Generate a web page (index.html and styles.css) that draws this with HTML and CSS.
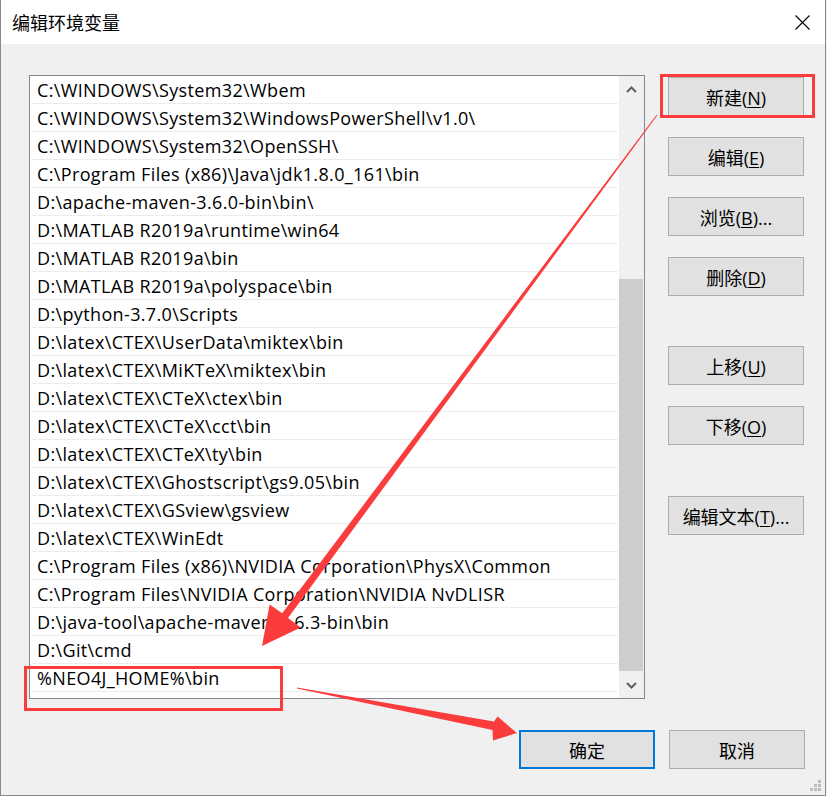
FILE: index.html
```html
<!DOCTYPE html>
<html lang="zh-CN">
<head>
<meta charset="utf-8">
<title>编辑环境变量</title>
<link rel="stylesheet" href="styles.css">
</head>
<body>
<div class="window">
  <div class="titlebar">
    <span class="title">编辑环境变量</span>
    <span class="close">
      <svg width="15" height="15" viewBox="0 0 15 15"><path d="M0.5 0.5 L14.5 14.5 M14.5 0.5 L0.5 14.5" stroke="#000" stroke-width="1.1" fill="none"/></svg>
    </span>
  </div>
  <div class="content">
    <div class="main">
      <div class="list">
        <div class="rows">
          <div class="row">C:\WINDOWS\System32\Wbem</div>
          <div class="row">C:\WINDOWS\System32\WindowsPowerShell\v1.0\</div>
          <div class="row">C:\WINDOWS\System32\OpenSSH\</div>
          <div class="row">C:\Program Files (x86)\Java\jdk1.8.0_161\bin</div>
          <div class="row">D:\apache-maven-3.6.0-bin\bin\</div>
          <div class="row">D:\MATLAB R2019a\runtime\win64</div>
          <div class="row">D:\MATLAB R2019a\bin</div>
          <div class="row">D:\MATLAB R2019a\polyspace\bin</div>
          <div class="row">D:\python-3.7.0\Scripts</div>
          <div class="row">D:\latex\CTEX\UserData\miktex\bin</div>
          <div class="row">D:\latex\CTEX\MiKTeX\miktex\bin</div>
          <div class="row">D:\latex\CTEX\CTeX\ctex\bin</div>
          <div class="row">D:\latex\CTEX\CTeX\cct\bin</div>
          <div class="row">D:\latex\CTEX\CTeX\ty\bin</div>
          <div class="row">D:\latex\CTEX\Ghostscript\gs9.05\bin</div>
          <div class="row">D:\latex\CTEX\GSview\gsview</div>
          <div class="row">D:\latex\CTEX\WinEdt</div>
          <div class="row">C:\Program Files (x86)\NVIDIA Corporation\PhysX\Common</div>
          <div class="row">C:\Program Files\NVIDIA Corporation\NVIDIA NvDLISR</div>
          <div class="row">D:\java-tool\apache-maven-3.6.3-bin\bin</div>
          <div class="row">D:\Git\cmd</div>
          <div class="row">%NEO4J_HOME%\bin</div>
        </div>
        <div class="scrollbar">
          <div class="sb-btn">
            <svg width="11" height="7" viewBox="0 0 11 7"><path d="M1 6 L5.5 1.5 L10 6" stroke="#606060" stroke-width="2" fill="none"/></svg>
          </div>
          <div class="track"><div class="thumb"></div></div>
          <div class="sb-btn">
            <svg width="11" height="7" viewBox="0 0 11 7"><path d="M1 1 L5.5 5.5 L10 1" stroke="#606060" stroke-width="2" fill="none"/></svg>
          </div>
        </div>
      </div>
      <div class="actions">
        <button class="btn">新建(<u>N</u>)</button>
        <button class="btn">编辑(<u>E</u>)</button>
        <button class="btn">浏览(<u>B</u>)...</button>
        <button class="btn">删除(<u>D</u>)</button>
        <button class="btn gap-lg">上移(<u>U</u>)</button>
        <button class="btn">下移(<u>O</u>)</button>
        <button class="btn gap-lg">编辑文本(<u>T</u>)...</button>
      </div>
    </div>
    <div class="footer">
      <button class="btn btn-default">确定</button>
      <button class="btn">取消</button>
    </div>
  </div>
  <svg class="grip" width="12" height="12" viewBox="0 0 12 12">
    <rect x="8" y="0" width="3" height="3" fill="#bdbdbd"/>
    <rect x="4" y="4" width="3" height="3" fill="#bdbdbd"/>
    <rect x="8" y="4" width="3" height="3" fill="#bdbdbd"/>
    <rect x="0" y="8" width="3" height="3" fill="#bdbdbd"/>
    <rect x="4" y="8" width="3" height="3" fill="#bdbdbd"/>
    <rect x="8" y="8" width="3" height="3" fill="#bdbdbd"/>
  </svg>
  <svg class="annot" width="827" height="796" viewBox="0 0 827 796">
    <rect x="661.5" y="75.5" width="152" height="41" fill="none" stroke="#fb3c3c" stroke-width="3"/>
    <rect x="25.5" y="667.5" width="256" height="42" fill="none" stroke="#fb3c3c" stroke-width="3"/>
    <polygon fill="#fb3c3c" points="657.4,115.3 288.0,617.9 300.8,627.6 262,646 269.6,604.4 282.2,613.2 656.6,114.7"/>
    <polygon fill="#fb3c3c" points="297,687.5 494.0,721.5 497.5,716.5 517,733 493.0,740.5 492.5,730.0 297,688.5"/>
  </svg>
</div>
</body>
</html>
```
FILE: styles.css
```css
html, body {
  margin: 0;
  padding: 0;
  background: #f0f0f0;
}

.window {
  position: relative;
  width: 826px;
  height: 796px;
  box-sizing: border-box;
  border-left: 1px solid #8a8a8a;
  border-right: 1px solid #8a8a8a;
  border-bottom: 1px solid #8a8a8a;
  display: flex;
  flex-direction: column;
  font-family: "Open Sans", "Noto Sans CJK SC", sans-serif;
  color: #000;
}

.titlebar {
  height: 44px;
  flex: none;
  background: #fff;
  display: flex;
  align-items: center;
  padding-left: 11px;
  padding-right: 15px;
}

.title {
  font-family: "Noto Sans CJK SC", sans-serif;
  font-size: 18px;
  line-height: 20px;
}

.close {
  margin-left: auto;
  display: flex;
  margin-top: 1px;
}

.content {
  flex: 1;
  background: #f0f0f0;
  padding: 31px 20px 0 28px;
  display: flex;
  flex-direction: column;
}

.main {
  display: flex;
  gap: 23px;
}

.list {
  width: 616px;
  height: 624px;
  box-sizing: border-box;
  border: 1px solid #828790;
  background: #fff;
  display: flex;
}

.rows {
  flex: 1;
  padding-right: 1px;
}

.row {
  height: 25px;
  padding-top: 2px;
  line-height: 25px;
  border-bottom: 1px solid #ececec;
  margin-left: 1px;
  padding-left: 6px;
  font-size: 18px;
  letter-spacing: 0.36px;
  white-space: nowrap;
  overflow: hidden;
}

.scrollbar {
  width: 25px;
  background: #f0f0f0;
  display: flex;
  flex-direction: column;
}

.sb-btn {
  height: 26px;
  display: flex;
  align-items: center;
  justify-content: center;
}

.track {
  flex: 1;
}

.thumb {
  margin-top: 177px;
  width: 24px;
  height: 392px;
  background: #cdcdcd;
}

.actions {
  width: 136px;
  padding-top: 2px;
  display: flex;
  flex-direction: column;
  gap: 21px;
}

.btn {
  width: 136px;
  height: 39px;
  box-sizing: border-box;
  background: #e1e1e1;
  border: 1px solid #adadad;
  font-family: "Open Sans", "Noto Sans CJK SC", sans-serif;
  font-size: 18px;
  color: #000;
  padding: 0;
  margin: 0;
  border-radius: 0;
}

.btn u {
  text-decoration-thickness: 1px;
  text-underline-offset: 2px;
}

.actions .gap-lg {
  margin-top: 29px;
}

.actions .gap-lg:last-child {
  margin-top: 30px;
}

.footer {
  margin-top: 31px;
  display: flex;
  justify-content: flex-end;
  gap: 14px;
}

.btn-default {
  border: 2px solid #0078d7;
}

.grip {
  position: absolute;
  right: 3px;
  bottom: 3px;
}

.annot {
  position: absolute;
  left: -1px;
  top: 0;
  pointer-events: none;
}
```
